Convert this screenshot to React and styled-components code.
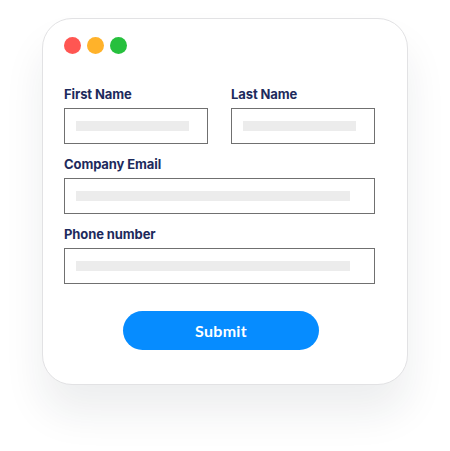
import React from "react";
import styled, { createGlobalStyle } from "styled-components";

const Global = createGlobalStyle`
  html, body { margin: 0; padding: 0; background: #ffffff; }
  body { font-family: Inter, "Liberation Sans", sans-serif; }
`;

const Page = styled.div`
  width: 450px;
  height: 451px;
  padding: 18px 0 0 42px;
  box-sizing: border-box;
`;

const Card = styled.div`
  width: 366px;
  height: 367px;
  box-sizing: border-box;
  background: #ffffff;
  border: 1px solid #e2e2e4;
  border-radius: 30px;
  box-shadow: 0 28px 40px rgba(30, 35, 50, 0.08);
  padding: 18px 31px 0 21px;
  display: flex;
  flex-direction: column;
`;

const Dots = styled.div`
  display: flex;
  gap: 6px;
  margin-bottom: 32px;
`;

const Dot = styled.span`
  width: 17px;
  height: 17px;
  border-radius: 50%;
  background: ${(p) => p.$c};
`;

const Grid = styled.div`
  display: grid;
  grid-template-columns: 144px 144px;
  column-gap: 23px;
  row-gap: 12px;
`;

const Field = styled.div`
  display: flex;
  flex-direction: column;
  gap: 5px;
  grid-column: ${(p) => (p.$full ? "1 / span 2" : "auto")};
`;

const Label = styled.label`
  font-family: Inter, "Liberation Sans", sans-serif;
  font-weight: 700;
  font-size: 13px;
  line-height: 17px;
  letter-spacing: -0.1px;
  color: #1d2a5c;
`;

const Input = styled.div`
  height: 36px;
  box-sizing: border-box;
  border: 1px solid #707070;
  padding: 0 ${(p) => (p.$full ? 24 : 18)}px 0 11px;
  display: flex;
  align-items: center;
`;

const Bar = styled.div`
  flex: 1;
  height: 10px;
  background: #ececec;
`;

const Actions = styled.div`
  display: flex;
  justify-content: center;
  padding-left: 2px;
  margin-top: 27px;
`;

const Button = styled.button`
  width: 196px;
  height: 39px;
  border: none;
  border-radius: 20px;
  background: #068cff;
  color: #ffffff;
  font-family: Lato, "Open Sans", sans-serif;
  font-weight: 700;
  font-size: 16px;
  letter-spacing: 0.3px;
  cursor: pointer;
`;

export default function App() {
  return (
    <>
      <Global />
      <Page>
        <Card>
          <Dots>
            <Dot $c="#ff5652" />
            <Dot $c="#ffb22a" />
            <Dot $c="#26c03d" />
          </Dots>
          <Grid>
            <Field>
              <Label>First Name</Label>
              <Input><Bar /></Input>
            </Field>
            <Field>
              <Label>Last Name</Label>
              <Input><Bar /></Input>
            </Field>
            <Field $full>
              <Label>Company Email</Label>
              <Input $full><Bar /></Input>
            </Field>
            <Field $full>
              <Label>Phone number</Label>
              <Input $full><Bar /></Input>
            </Field>
          </Grid>
          <Actions>
            <Button>Submit</Button>
          </Actions>
        </Card>
      </Page>
    </>
  );
}
